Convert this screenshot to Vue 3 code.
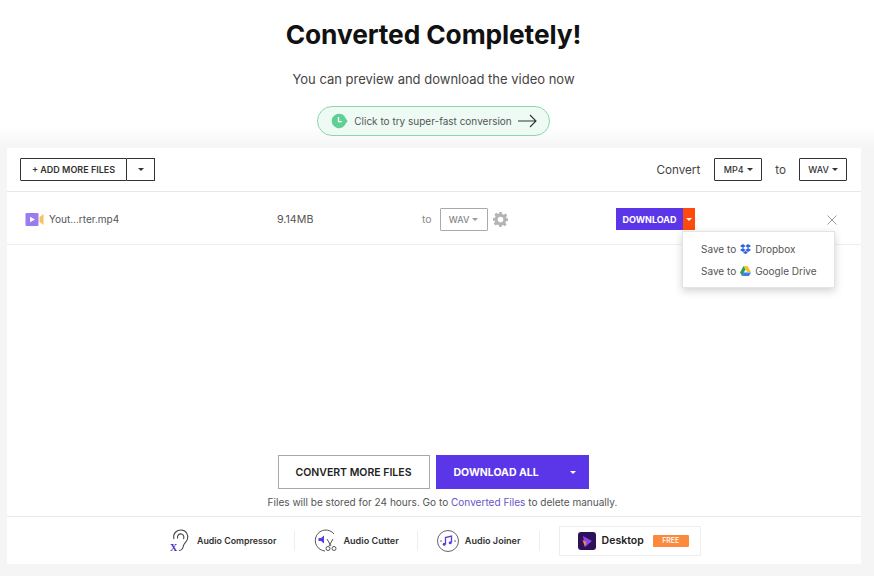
<script setup>
const tools = [
  { name: 'Audio Compressor', kind: 'ear' },
  { name: 'Audio Cutter', kind: 'cut' },
  { name: 'Audio Joiner', kind: 'join' }
]
</script>

<template>
  <div class="page">
    <header class="hero">
      <h1>Converted Completely!</h1>
      <p class="sub">You can preview and download the video now</p>
      <a class="pill">
        <svg width="18" height="16" viewBox="0 0 18 16"><path d="M9 0.800a7.200 7.200 0 0 1 6.600 4.400l2 2.800-2 2.800A7.200 7.200 0 1 1 9 .8z" fill="#5fcf94"/><path d="M8.500 4v4.600h3.400" fill="none" stroke="#fff" stroke-width="1.300"/></svg>
        <span>Click to try super-fast conversion</span>
        <svg width="19" height="14" viewBox="0 0 19 14"><path d="M0 7h18M12 1l6 6-6 6" fill="none" stroke="#333" stroke-width="1.100"/></svg>
      </a>
    </header>

    <section class="card">
      <div class="toolbar">
        <div class="split">
          <button class="add">+ ADD MORE FILES</button>
          <button class="caret-btn"><i class="caret"></i></button>
        </div>
        <div class="convert">
          <span class="c-label">Convert</span>
          <button class="fmt">MP4<i class="caret small"></i></button>
          <span class="c-to">to</span>
          <button class="fmt">WAV<i class="caret small"></i></button>
        </div>
      </div>

      <div class="file-row">
        <div class="f-name">
          <svg width="19" height="13" viewBox="0 0 19 13"><rect x=".5" width="13" height="13" rx="1" fill="#9a7cf0"/><path d="M5 3.700v5.600L10 6.500z" fill="#fff"/><path d="M14.500 4 18.500 1v11l-4-3z" fill="#f6c35f"/></svg>
          <span>Yout...rter.mp4</span>
        </div>
        <div class="f-size">9.14MB</div>
        <div class="f-to">
          <span>to</span>
          <button class="fmt-grey">WAV<i class="caret small grey"></i></button>
          <svg width="15" height="15" viewBox="0 0 24 24"><path fill="#b4b4b4" fill-rule="evenodd" d="M10 0h4l.7 3.300 2.300 1 2.900-1.800 2.800 2.800-1.800 2.900 1 2.300L24 10v4l-3.100.7-1 2.300 1.800 2.900-2.800 2.800-2.900-1.800-2.300 1L14 24h-4l-.7-3.100-2.300-1-2.900 1.800-2.800-2.800L3.100 16l-1-2.300L0 14v-4l3.100-.7 1-2.300L2.300 4.100l2.800-2.800L8 3.100l2.300-1zM12 7.500a4.500 4.500 0 1 0 0 9 4.500 4.500 0 0 0 0-9z"/></svg>
        </div>
        <div class="dl">
          <button class="dl-main">DOWNLOAD</button>
          <button class="dl-caret"><i class="caret tiny white"></i></button>
          <div class="menu">
            <div class="menu-item">
              <span>Save to</span>
              <svg width="11" height="10" viewBox="0 0 22 20"><path fill="#2a63e0" d="M6 0 0 4l6 4 5-4zM16 0l-5 4 5 4 6-4zM0 12l6 4 5-4-5-4zM16 8l-5 4 5 4 6-4zM6 17.500l5 2.500 5-2.500-5-4z"/></svg>
              <span>Dropbox</span>
            </div>
            <div class="menu-item">
              <span>Save to</span>
              <svg width="11" height="10" viewBox="0 0 22 20"><path fill="#f6c32f" d="M7 0h8l7 12h-8z"/><path fill="#2f9e57" d="M7 0 0 13l4 7 7-13z"/><path fill="#3f7ee8" d="M7 13h15l-4 7H4z"/></svg>
              <span>Google Drive</span>
            </div>
          </div>
        </div>
        <svg class="close" width="10" height="10" viewBox="0 0 10 10"><path d="M.5.5l9 9M9.500.5l-9 9" stroke="#999" stroke-width="1" fill="none"/></svg>
      </div>

      <div class="spacer"></div>

      <div class="actions">
        <button class="more">CONVERT MORE FILES</button>
        <button class="all"><span>DOWNLOAD ALL</span><i class="caret tiny white"></i></button>
      </div>
      <p class="note">Files will be stored for 24 hours. Go to <a>Converted Files</a> to delete manually.</p>

      <footer class="foot">
        <template v-for="t in tools" :key="t.name">
          <div class="tool">
            <svg v-if="t.kind === 'ear'" width="21" height="23" viewBox="0 0 21 23">
              <path d="M4 10C2.500 4 7 1 11 1c5 0 7.500 4.500 6.500 9-.7 3-3.500 4-4 6.500-.5 3-1.500 5-4.500 5" fill="none" stroke="#444" stroke-width="1.100"/>
              <path d="M7.500 9.500C7 6 9.500 4.500 11.500 5s3 3 2 5" fill="none" stroke="#444" stroke-width="1.100"/>
              <text x="0" y="22" class="x-mark">X</text>
            </svg>
            <svg v-else-if="t.kind === 'cut'" width="23" height="23" viewBox="0 0 23 23">
              <path d="M20 5A10.500 10.500 0 1 0 11 22" fill="none" stroke="#555" stroke-width="1"/>
              <path d="M4.500 9h2.500L10 6.500v8L7 12H4.500z" fill="#5b3de0"/>
              <path d="M13 10l4 7M19 10l-4 7" stroke="#555" stroke-width="1" fill="none"/>
              <circle cx="14" cy="19.500" r="2" fill="#fff" stroke="#555"/><circle cx="20" cy="19.500" r="2" fill="#fff" stroke="#555"/>
            </svg>
            <svg v-else width="22" height="22" viewBox="0 0 22 22">
              <circle cx="11" cy="11" r="10.500" fill="none" stroke="#666" stroke-width="1"/>
              <path d="M8.500 14V7.500l6-1.500v6.500" fill="none" stroke="#5b3de0" stroke-width="1.300"/>
              <circle cx="7.200" cy="14.300" r="1.500" fill="#5b3de0"/><circle cx="13.200" cy="12.800" r="1.500" fill="#5b3de0"/>
              <path d="M3 11h2M17 11h2" stroke="#666"/>
            </svg>
            <span>{{ t.name }}</span>
          </div>
          <i class="vr"></i>
        </template>
        <div class="desktop">
          <svg width="18" height="18" viewBox="0 0 18 18"><rect width="18" height="18" rx="3" fill="#2d1258"/><path d="M5 4l9 5-7 6z" fill="#8a45f5"/><path d="M4.500 8l2.500 7 1.500-5z" fill="#f08a3c"/></svg>
          <b>Desktop</b>
          <em>FREE</em>
        </div>
      </footer>
    </section>
  </div>
</template>

<style>
html, body { margin: 0; background: #fff; }
</style>

<style scoped>
.page {
  width: 874px;
  height: 576px;
  overflow: hidden;
  font-family: Inter, "Noto Sans", sans-serif;
  color: #333;
  background: linear-gradient(#fff 0, #fff 125px, #f5f5f5 148px, #f5f5f5 100%);
}
button { font-family: inherit; padding: 0; cursor: pointer; background: #fff; }
i { display: block; }
.hero { height: 148px; box-sizing: border-box; padding-right: 7px; display: flex; flex-direction: column; align-items: center; }
h1 { margin: 17px 0 0; font-size: 26.300px; line-height: 36px; font-weight: 700; color: #111; letter-spacing: -.1px; }
.sub { margin: 16px 0 0; font-size: 13px; line-height: 20px; color: #444; }
.pill {
  margin: 17px 0 0;
  width: 233px; height: 30px; box-sizing: border-box;
  border: 1px solid #8fd4b0; border-radius: 15px; background: #eefbf5;
  display: flex; align-items: center; justify-content: center; gap: 6px;
  font-size: 10px; color: #555;
}
.card {
  margin: 0 13px 0 7px;
  height: 416px;
  background: #fff;
  display: flex; flex-direction: column;
}
.toolbar {
  height: 44px; flex: none; box-sizing: border-box;
  border-bottom: 1px solid #e8e8e8;
  padding: 10px 14px 0 13px;
  display: flex; justify-content: space-between; align-items: flex-start;
}
.split { display: flex; }
.add, .caret-btn { height: 23px; border: 1px solid #333; font-size: 9px; font-weight: 600; color: #333; border-radius: 1px 0 0 1px; }
.add { width: 107px; }
.caret-btn { width: 28px; border-left: 0; border-radius: 0 1px 1px 0; display: flex; align-items: center; justify-content: center; }
.caret { width: 0; height: 0; border: 3px solid transparent; border-top-color: #333; border-bottom: 0; }
.caret.small { display: inline-block; margin-left: 3px; vertical-align: 2px; border-width: 3px 3px 0; }
.caret.grey { border-top-color: #999; }
.caret.tiny { border-width: 3px 3px 0; }
.caret.white { border-top-color: #fff; }
.convert { display: flex; align-items: center; font-size: 11.700px; color: #444; height: 23px; }
.c-label { margin-right: 14px; }
.c-to { margin: 0 13px; }
.fmt { width: 48px; height: 23px; border: 1px solid #333; border-radius: 1px; font-size: 9px; font-weight: 500; color: #333; }
.file-row {
  height: 53px; flex: none; box-sizing: border-box;
  border-bottom: 1px solid #eee;
  display: flex; align-items: center; position: relative;
  padding-top: 2px;
}
.f-name { width: 270px; padding-left: 18px; box-sizing: border-box; display: flex; align-items: center; gap: 5px; font-size: 10px; color: #555; }
.f-size { width: 145px; font-size: 10.700px; color: #555; }
.f-to { width: 194px; display: flex; align-items: center; font-size: 10.500px; color: #888; }
.fmt-grey { width: 48px; height: 23px; margin: 0 5px 0 8px; border: 1px solid #aaa; border-radius: 1px; font-size: 9px; font-weight: 500; color: #888; }
.dl { display: flex; position: relative; }
.dl-main { width: 67px; height: 22px; border: 0; background: #5b36e8; color: #fff; font-size: 9px; font-weight: 700; }
.dl-caret { width: 12px; height: 22px; border: 0; background: #ff4a0e; display: flex; align-items: center; justify-content: center; }
.menu {
  position: absolute; left: 66px; top: 23px;
  width: 153px; height: 57px; box-sizing: border-box;
  padding-top: 6px;
  background: #fff; border: 1px solid #e4e4e4;
  box-shadow: 0 3px 8px rgba(0,0,0,.18);
  z-index: 2;
}
.menu-item { height: 22px; padding-left: 18px; display: flex; align-items: center; gap: 4px; font-size: 10px; color: #555; }
.close { position: absolute; left: 820px; top: 23px; }
.spacer { flex: 1; }
.actions { display: flex; justify-content: center; gap: 6px; flex: none; padding-right: 2px; }
.more { width: 152px; height: 34px; box-sizing: border-box; border: 1px solid #aaa; font-size: 10.500px; font-weight: 600; color: #222; }
.all {
  width: 153px; height: 34px; border: 0; background: #5b36e8; color: #fff;
  font-size: 10.500px; font-weight: 700;
  display: flex; align-items: center; justify-content: space-between; padding: 0 13px 0 18px;
}
.note { margin: 6px 0 1px; padding-left: 17px; font-size: 10.050px; line-height: 14px; color: #555; text-align: center; flex: none; }
.note a { color: #6a55c8; }
.foot {
  height: 48px; margin-top: 6px; flex: none; box-sizing: border-box;
  border-top: 1px solid #e8e8e8;
  display: flex; align-items: center; padding-left: 163px;
}
.tool { display: flex; align-items: center; gap: 6px; font-size: 9.100px; font-weight: 600; color: #333; }
.tool:first-child { font-size: 8.800px; }
.x-mark { font-family: "Liberation Serif", serif; font-size: 10px; font-weight: 700; fill: #4a2fc0; }
.vr { width: 1px; height: 20px; background: #eee; margin: 0 19px 0 18px; }
.desktop {
  width: 142px; height: 30px; box-sizing: border-box;
  border: 1px solid #eee;
  display: flex; align-items: center; gap: 6px; padding-left: 18px;
}
.desktop b { font-size: 10.500px; font-weight: 600; color: #222; }
.desktop em { margin-left: 3px; width: 36px; height: 12px; background: #fb8a3e; color: #fff; border-radius: 1px; font-style: normal; font-size: 7px; line-height: 12px; text-align: center; font-weight: 500; }
</style>
